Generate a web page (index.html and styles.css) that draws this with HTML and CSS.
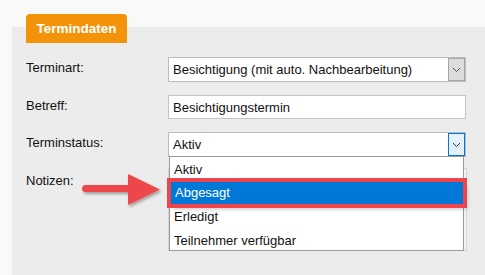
FILE: index.html
```html
<!DOCTYPE html>
<html lang="de">
<head>
  <meta charset="UTF-8">
  <title>Termindaten</title>
  <link rel="stylesheet" href="styles.css">
</head>
<body>
  <div class="panel">
    <div class="tab">Termindaten</div>

    <!-- Terminart -->
    <div class="row row-art">
      <label class="label">Terminart:</label>
      <div class="select">
        <span class="value">Besichtigung (mit auto. Nachbearbeitung)</span>
        <span class="btn">
          <svg width="9" height="6" viewBox="0 0 9 6"><path d="M1 1 L4.5 4.5 L8 1" fill="none" stroke="#555" stroke-width="1"/></svg>
        </span>
      </div>
    </div>

    <!-- Betreff -->
    <div class="row row-betreff">
      <label class="label">Betreff:</label>
      <div class="input">Besichtigungstermin</div>
    </div>

    <!-- Terminstatus, aufgeklappt -->
    <div class="row row-status">
      <label class="label">Terminstatus:</label>
      <div class="select focused">
        <span class="value">Aktiv</span>
        <span class="btn">
          <svg width="9" height="6" viewBox="0 0 9 6"><path d="M1 1 L4.5 4.5 L8 1" fill="none" stroke="#333" stroke-width="1"/></svg>
        </span>
        <ul class="dropdown">
          <li>Aktiv</li>
          <li class="selected">Abgesagt</li>
          <li>Erledigt</li>
          <li>Teilnehmer verfügbar</li>
        </ul>
      </div>
    </div>

    <!-- Notizen -->
    <div class="row row-notes">
      <label class="label">Notizen:</label>
      <div class="textarea"></div>
    </div>

    <!-- Hinweispfeil -->
    <svg class="arrow" width="90" height="42" viewBox="0 0 90 42">
      <defs>
        <filter id="shadow" x="-20%" y="-30%" width="140%" height="170%">
          <feDropShadow dx="1.5" dy="2" stdDeviation="1.5" flood-color="#000" flood-opacity="0.35"/>
        </filter>
      </defs>
      <path filter="url(#shadow)" fill="#ee474b"
            d="M5.5 14 L48 14 L48 3 L80 18.5 L48 34 L48 21 L5.5 21 A3.5 3.5 0 0 1 5.5 14 Z"/>
    </svg>
  </div>
</body>
</html>
```

FILE: styles.css
```css
body {
  margin: 0;
  background-color: #f9f9f9;
  font-family: "Liberation Sans", Arial, sans-serif;
  font-size: 13px;
  color: #111;
}
.panel {
  position: relative;
  margin: 27px 0 0 12px;
  height: 248px;
  padding: 30px 0 0 14px;
  box-sizing: border-box;
  background-color: #ececec;
}
.tab {
  position: absolute;
  top: -13px;
  left: 14px;
  width: 101px;
  height: 29px;
  line-height: 29px;
  text-align: center;
  background-color: #f39309;
  color: #fff;
  font-weight: bold;
  font-size: 13.5px;
  border-radius: 4px 4px 0 0;
}
.row {
  display: flex;
}
.row-art { margin-bottom: 13px; }
.row-betreff { margin-bottom: 13px; }
.row-status { margin-bottom: 11px; }
.label {
  width: 142px;
  padding-top: 3px;
}
.row-notes .label {
  padding-top: 5px;
}
.select, .input {
  position: relative;
  display: flex;
  align-items: center;
  width: 298px;
  height: 25px;
  box-sizing: border-box;
  background: #fff;
  border: 1px solid #bcbcbc;
}
.input {
  height: 24px;
  border-color: #c4c4c4;
}
.value, .input {
  padding-left: 4px;
}
.value {
  flex: 1;
}
.btn {
  display: flex;
  align-items: center;
  justify-content: center;
  width: 17px;
  align-self: stretch;
  box-sizing: border-box;
  background: #dcdcdc;
  border: 1px solid #a6a6a6;
}
.focused .btn {
  background: #e5f1fb;
  border-color: #0078d7;
}
.textarea {
  width: 299px;
  height: 83px;
  box-sizing: border-box;
  border: 1px solid #d6d6d6;
  background: #f3f3f3;
}
.dropdown {
  position: absolute;
  top: 23px;
  left: 0;
  width: 295px;
  height: 95px;
  margin: 0;
  padding: 1px 0 0 0;
  box-sizing: border-box;
  list-style: none;
  background: #fff;
  border: 1px solid #9a9a9a;
  z-index: 2;
}
.dropdown li {
  height: 23.5px;
  line-height: 23px;
  padding-left: 4px;
}
.dropdown li.selected {
  position: relative;
  margin: 0 0 0 1px;
  height: 22px;
  line-height: 22px;
  background: #0078d7;
  color: #fff;
  outline: 4px solid #ef444b;
  box-shadow: 3px 4px 5px rgba(0, 0, 0, 0.35);
}
.dropdown li.selected + li {
  margin-top: 1.5px;
}
.arrow {
  position: absolute;
  left: 68px;
  top: 144px;
  z-index: 3;
}
```
